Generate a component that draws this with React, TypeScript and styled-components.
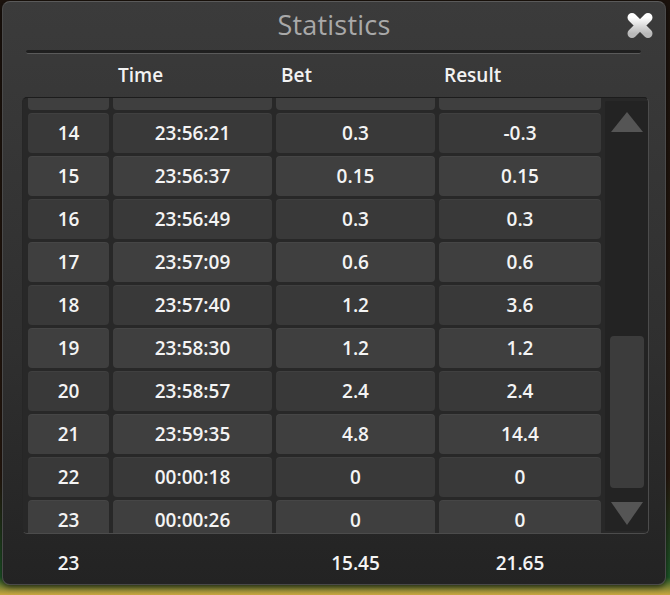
import React, { useLayoutEffect, useRef } from 'react';
import styled, { createGlobalStyle } from 'styled-components';

const GlobalStyle = createGlobalStyle`
    html, body {
        margin: 0;
        padding: 0;
    }
    body {
        width: 670px;
        height: 595px;
        overflow: hidden;
        background: linear-gradient(180deg, #1c130d 0%, #2a1a10 80%, #1f5a2a 97%, #c9a640 100%);
        font-family: 'Open Sans', 'Noto Sans', 'DejaVu Sans', sans-serif;
    }
`;

const ROW_PITCH = 43;
const SCROLL_TOP = 548;

const Dialog = styled.div`
    box-sizing: border-box;
    margin: 1px 0 0 2px;
    width: 664px;
    height: 584px;
    border: 1px solid #4a4a4a;
    border-top-color: #5a5a5a;
    border-radius: 8px;
    background: linear-gradient(180deg, #3b3b3b 0%, #2f2f2f 60%, #232323 100%);
    box-shadow: 0 2px 6px rgba(0, 0, 0, 0.7);
    display: flex;
    flex-direction: column;
`;

const TitleBar = styled.div`
    height: 48px;
    display: grid;
    grid-template-columns: 1fr auto 1fr;
    align-items: center;
`;

const Title = styled.h1`
    grid-column: 2;
    margin: 0;
    font-size: 27px;
    font-weight: 400;
    color: #a9a9a9;
    letter-spacing: 0.2px;
    line-height: 1;
    padding-bottom: 4px;
`;

const CloseButton = styled.button`
    grid-column: 3;
    justify-self: end;
    margin: 0 11px 2px 0;
    padding: 0;
    border: none;
    background: none;
    width: 28px;
    height: 27px;
    cursor: pointer;
    display: flex;
`;

const Separator = styled.div`
    height: 3px;
    margin: 0 24px 0 23px;
    background: #1f1f1f;
    border-bottom: 1px solid #5a5a5a;
    border-radius: 2px;
`;

const Columns = styled.div`
    display: grid;
    grid-template-columns: 81px 159px 159px 162px;
    column-gap: 4px;
`;

const HeaderRow = styled(Columns)`
    height: 43px;
    padding-left: 25px;
    align-items: center;
`;

const HeaderCell = styled.div`
    padding-left: 5px;
    font-size: 19px;
    font-weight: 600;
    color: #f2f2f2;
    padding-bottom: 2px;
`;

const Frame = styled.div`
    box-sizing: border-box;
    margin-left: 19px;
    width: 627px;
    height: 437px;
    border: 1px solid #4c4c4c;
    border-top-color: #1c1c1c;
    border-left-color: #262626;
    border-radius: 5px;
    background: #282828;
    display: flex;
`;

const List = styled.div`
    flex: 1;
    overflow: hidden;
    padding: 4px 0 4px 5px;
`;

const Row = styled(Columns)`
    height: 40px;
    margin-bottom: ${ROW_PITCH - 40}px;
`;

const Cell = styled.div<{ $light: boolean }>`
    display: flex;
    align-items: center;
    justify-content: center;
    border-radius: 4px;
    background: ${p => (p.$light ? '#3f3f3f' : '#393939')};
    box-shadow: inset 0 1px 0 rgba(255, 255, 255, 0.04);
    font-size: 19px;
    font-weight: 600;
    color: #f4f4f4;
`;

const Scrollbar = styled.div`
    width: 43px;
    margin-left: 4px;
    margin-top: 3px;
    margin-bottom: 2px;
    background: #232323;
    border-radius: 2px;
    display: flex;
    flex-direction: column;
    align-items: center;
`;

const Arrow = styled.div<{ $down?: boolean }>`
    width: 0;
    height: 0;
    border-left: 16px solid transparent;
    border-right: 16px solid transparent;
    ${p =>
        p.$down
            ? 'border-top: 23px solid #555555; margin-bottom: 6px;'
            : 'border-bottom: 20px solid #555555; margin-top: 11px;'}
`;

const Track = styled.div`
    flex: 1;
    align-self: stretch;
    display: flex;
    flex-direction: column;
    align-items: center;
    padding-top: 204px;
`;

const Thumb = styled.div`
    width: 34px;
    height: 152px;
    border-radius: 4px;
    background: #3c3c3c;
    margin-left: 1px;
`;

const Footer = styled(Columns)`
    flex: 1;
    padding: 8px 0 0 25px;
    align-items: center;
`;

const FooterCell = styled.div`
    text-align: center;
    font-size: 19px;
    font-weight: 600;
    color: #f4f4f4;
`;

type Round = { id: number; time: string; bet: string; result: string };

const rounds: Round[] = [
    { id: 1, time: '23:51:04', bet: '0.3', result: '0.3' },
    { id: 2, time: '23:51:22', bet: '0.6', result: '-0.6' },
    { id: 3, time: '23:51:47', bet: '0.3', result: '0.3' },
    { id: 4, time: '23:52:10', bet: '0.3', result: '-0.3' },
    { id: 5, time: '23:52:31', bet: '0.6', result: '0.6' },
    { id: 6, time: '23:52:58', bet: '0.3', result: '-0.3' },
    { id: 7, time: '23:53:19', bet: '0.3', result: '0.2' },
    { id: 8, time: '23:53:44', bet: '0.3', result: '-0.3' },
    { id: 9, time: '23:54:06', bet: '0.3', result: '-0.3' },
    { id: 10, time: '23:54:33', bet: '0.3', result: '0.3' },
    { id: 11, time: '23:55:02', bet: '0.3', result: '-0.3' },
    { id: 12, time: '23:55:29', bet: '0.3', result: '-0.3' },
    { id: 13, time: '23:55:58', bet: '0', result: '0' },
    { id: 14, time: '23:56:21', bet: '0.3', result: '-0.3' },
    { id: 15, time: '23:56:37', bet: '0.15', result: '0.15' },
    { id: 16, time: '23:56:49', bet: '0.3', result: '0.3' },
    { id: 17, time: '23:57:09', bet: '0.6', result: '0.6' },
    { id: 18, time: '23:57:40', bet: '1.2', result: '3.6' },
    { id: 19, time: '23:58:30', bet: '1.2', result: '1.2' },
    { id: 20, time: '23:58:57', bet: '2.4', result: '2.4' },
    { id: 21, time: '23:59:35', bet: '4.8', result: '14.4' },
    { id: 22, time: '00:00:18', bet: '0', result: '0' },
    { id: 23, time: '00:00:26', bet: '0', result: '0' },
];

const totals = { count: '23', bet: '15.45', result: '21.65' };

const CloseIcon = () => (
    <svg width="28" height="27" viewBox="0 0 28 27">
        <defs>
            <linearGradient id="closeFill" x1="0" y1="0" x2="0" y2="1">
                <stop offset="0" stopColor="#ffffff" />
                <stop offset="1" stopColor="#b9b9b9" />
            </linearGradient>
        </defs>
        <path
            d="M6 5.5 L22 21.5 M22 5.5 L6 21.5"
            stroke="url(#closeFill)"
            strokeWidth="9"
            strokeLinecap="round"
            fill="none"
        />
    </svg>
);

const App = () => {
    const listRef = useRef<HTMLDivElement>(null);

    useLayoutEffect(() => {
        if (listRef.current) listRef.current.scrollTop = SCROLL_TOP;
    }, []);

    return (
        <>
            <GlobalStyle />
            <Dialog>
                <TitleBar>
                    <Title>Statistics</Title>
                    <CloseButton aria-label="Close">
                        <CloseIcon />
                    </CloseButton>
                </TitleBar>
                <Separator />

                <HeaderRow>
                    <HeaderCell />
                    <HeaderCell>Time</HeaderCell>
                    <HeaderCell>Bet</HeaderCell>
                    <HeaderCell>Result</HeaderCell>
                </HeaderRow>

                <Frame>
                    <List ref={listRef}>
                        {rounds.map(r => {
                            const light = r.id % 2 === 1;
                            return (
                                <Row key={r.id}>
                                    <Cell $light={light}>{r.id}</Cell>
                                    <Cell $light={light}>{r.time}</Cell>
                                    <Cell $light={light}>{r.bet}</Cell>
                                    <Cell $light={light}>{r.result}</Cell>
                                </Row>
                            );
                        })}
                    </List>
                    <Scrollbar>
                        <Arrow />
                        <Track>
                            <Thumb />
                        </Track>
                        <Arrow $down />
                    </Scrollbar>
                </Frame>

                <Footer>
                    <FooterCell>{totals.count}</FooterCell>
                    <FooterCell />
                    <FooterCell>{totals.bet}</FooterCell>
                    <FooterCell>{totals.result}</FooterCell>
                </Footer>
            </Dialog>
        </>
    );
};

export default App;
